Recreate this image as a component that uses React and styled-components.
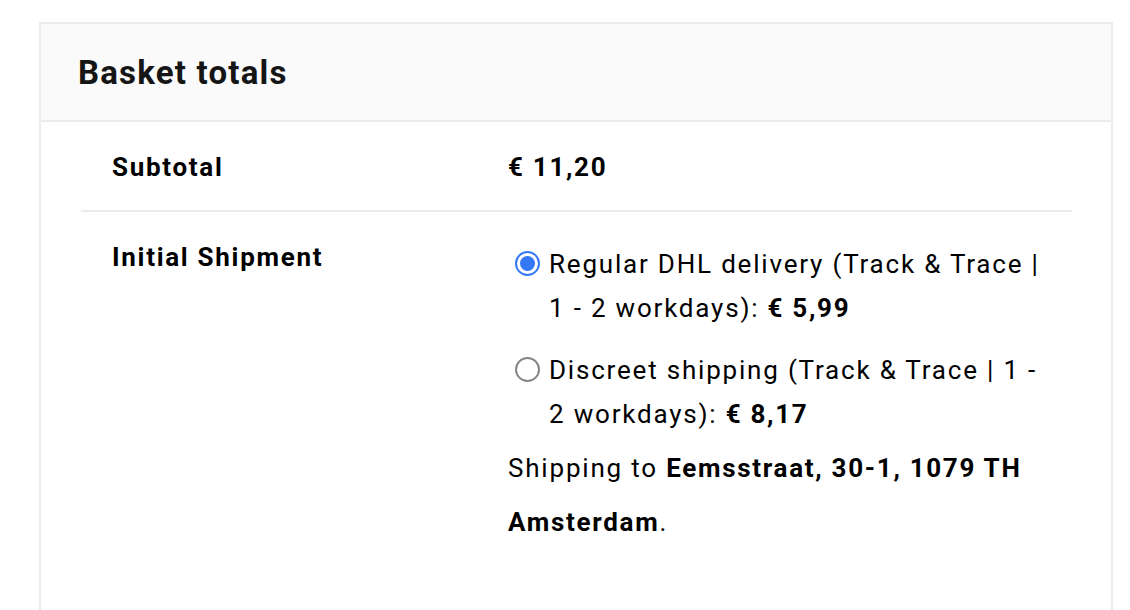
import styled, { createGlobalStyle } from "styled-components";
import { useState } from "react";

const GlobalStyle = createGlobalStyle`
    html, body {
        margin: 0;
        padding: 0;
        background: #fff;
        font-family: Roboto, "Liberation Sans", Arial, sans-serif;
        color: #000;
    }
`;

const Page = styled.div`
    padding: 22px 17px 0 39px;
    height: 610px;
    box-sizing: border-box;
    overflow: hidden;
`;

const Card = styled.section`
    border: 2px solid #ebebeb;
    border-bottom: none;
    min-height: 620px;
    background: #fff;
`;

const CardHeader = styled.header`
    background: #fafafa;
    border-bottom: 2px solid #ebebeb;
    height: 96px;
    display: flex;
    align-items: center;
    padding: 0 37px;
`;

const Title = styled.h2`
    margin: 0;
    font-size: 33px;
    font-weight: 700;
    color: #151515;
    letter-spacing: 1.2px;
`;

const CardBody = styled.div`
    padding: 0 39px 0 40px;
`;

const Row = styled.div`
    display: grid;
    grid-template-columns: 427px 1fr;
    padding: ${(p) => (p.$divider ? "23px 0 21px" : "23px 0")};
    border-bottom: ${(p) => (p.$divider ? "2px solid #ebebeb" : "none")};
    font-size: 26px;
    line-height: 44px;
`;

const Label = styled.div`
    padding-left: 31px;
    font-weight: 700;
    letter-spacing: 1.7px;
`;

const Value = styled.div`
    font-weight: ${(p) => (p.$bold ? 700 : 400)};
    letter-spacing: ${(p) => (p.$bold ? "1.7px" : "1.8px")};
    padding-right: 16px;
`;

const OptionList = styled.div`
    display: flex;
    flex-direction: column;
    gap: 18px;
    margin-top: 7px;
`;

const Option = styled.label`
    display: flex;
    align-items: flex-start;
    gap: 9px;
    cursor: pointer;
`;

const Radio = styled.span`
    flex: none;
    width: 25px;
    height: 25px;
    margin: 9px 0 0 7px;
    box-sizing: border-box;
    border-radius: 50%;
    border: 2px solid ${(p) => (p.$checked ? "#3478f6" : "#858585")};
    background: #fff;
    display: flex;
    align-items: center;
    justify-content: center;

    &::after {
        content: "";
        width: 15px;
        height: 15px;
        border-radius: 50%;
        background: ${(p) => (p.$checked ? "#3478f6" : "transparent")};
    }
`;

const Price = styled.b`
    letter-spacing: 1.7px;
`;

const Note = styled.p`
    margin: 5px 0 0;
    line-height: 54px;
`;

const options = [
    { id: "dhl", text: "Regular DHL delivery (Track & Trace | 1 - 2 workdays):", price: "€ 5,99" },
    { id: "discreet", text: "Discreet shipping (Track & Trace | 1 - 2 workdays):", price: "€ 8,17" },
];

export default function App() {
    const [selected, setSelected] = useState("dhl");

    return (
        <>
            <GlobalStyle />
            <Page>
                <Card>
                    <CardHeader>
                        <Title>Basket totals</Title>
                    </CardHeader>
                    <CardBody>
                        <Row $divider>
                            <Label>Subtotal</Label>
                            <Value $bold>€ 11,20</Value>
                        </Row>
                        <Row>
                            <Label>Initial Shipment</Label>
                            <Value>
                                <OptionList>
                                    {options.map((o) => (
                                        <Option key={o.id} onClick={() => setSelected(o.id)}>
                                            <Radio $checked={selected === o.id} />
                                            <span>
                                                {o.text} <Price>{o.price}</Price>
                                            </span>
                                        </Option>
                                    ))}
                                </OptionList>
                                <Note>
                                    Shipping to <Price>Eemsstraat, 30-1, 1079 TH Amsterdam</Price>.
                                </Note>
                            </Value>
                        </Row>
                    </CardBody>
                </Card>
            </Page>
        </>
    );
}
